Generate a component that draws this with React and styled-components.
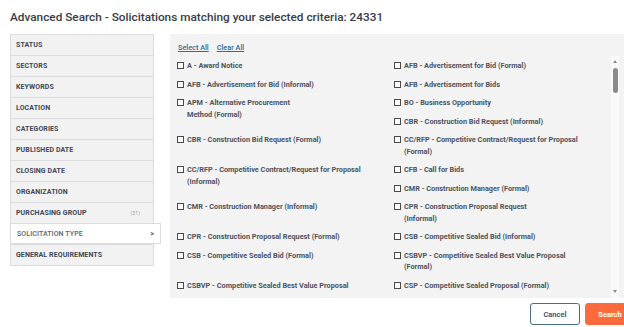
import React from 'react';
import styled, { createGlobalStyle, css } from 'styled-components';

const GlobalStyle = createGlobalStyle`
  html, body {
    margin: 0;
    padding: 0;
    background: #ffffff;
    overflow: hidden;
  }
  body {
    font-family: Roboto, "Liberation Sans", Arial, sans-serif;
  }
`;

const Modal = styled.div`
  width: 645px;
  box-sizing: border-box;
  padding: 9px 10px 0 10px;
`;

const Title = styled.h1`
  margin: 0;
  font-size: 11.8px;
  line-height: 17px;
  font-weight: 500;
  color: #383c48;
`;

const Body = styled.div`
  display: flex;
  align-items: flex-start;
  gap: 16px;
  margin-top: 8px;
`;

const Sidebar = styled.ul`
  list-style: none;
  margin: 0;
  padding: 0;
  width: 144px;
  flex-shrink: 0;
  box-sizing: border-box;
  background: #f2f2f2;
  border: 1px solid #dcdcdc;
`;

const NavItem = styled.li`
  height: 21px;
  box-sizing: border-box;
  display: flex;
  align-items: center;
  justify-content: space-between;
  padding: 0 5px;
  border-top: 1px solid #dcdcdc;
  font-size: 7px;
  font-weight: 700;
  color: #3e4757;
  text-transform: uppercase;
  letter-spacing: 0.1px;

  &:first-child {
    border-top: none;
    height: 20px;
  }

  ${(p) =>
    p.$active &&
    css`
      background: #ffffff;
      margin: 0 -8px 0 -1px;
      padding-left: 6px;
      border: 1px solid #dcdcdc;
      color: #5a6170;
      font-weight: 500;
    `}
`;

const Count = styled.span`
  font-size: 5px;
  font-weight: 400;
  color: #9a9a9a;
  margin-right: 8px;
`;

const Chevron = styled.span`
  font-size: 7px;
  font-weight: 700;
  color: #555;
  margin-right: 1px;
`;

const Panel = styled.section`
  width: 456px;
  height: 264px;
  flex-shrink: 0;
  background: #f3f3f3;
  display: flex;
  flex-direction: column;
  padding-top: 4px;
  box-sizing: border-box;
`;

const LinkRow = styled.div`
  display: flex;
  gap: 8px;
  padding-left: 8px;
  height: 18px;
  align-items: center;
`;

const TextLink = styled.a`
  font-size: 7.3px;
  font-weight: 500;
  color: #2d6c94;
  text-decoration: underline;
  cursor: pointer;
`;

const ListArea = styled.div`
  flex: 1;
  display: flex;
  min-height: 0;
`;

const Grid = styled.div`
  flex: 1;
  overflow: hidden;
  display: grid;
  grid-template-columns: 217px 217px;
  grid-auto-rows: auto;
  align-content: start;
  padding-left: 7px;
`;

const Option = styled.label`
  grid-column: ${(p) => p.$col};
  grid-row: ${(p) => p.$row} / span ${(p) => p.$span || 1};
  display: flex;
  align-items: flex-start;
  gap: 3px;
  padding: 4px 0 3px 0;
  font-size: 7.3px;
  line-height: 11.5px;
  font-weight: 700;
  color: #4d525d;
  cursor: pointer;
`;

const Box = styled.span`
  width: 7px;
  height: 7px;
  box-sizing: border-box;
  flex-shrink: 0;
  margin-top: 2px;
  border: 1px solid #4a4a4a;
  background: #fbfbfb;
`;

const Track = styled.div`
  width: 8px;
  margin-right: 7px;
  background: #fafafa;
  display: flex;
  flex-direction: column;
  align-items: center;
  padding: 4px 0 5px 0;
  box-sizing: border-box;
`;

const Arrow = styled.span`
  width: 0;
  height: 0;
  border-left: 2.5px solid transparent;
  border-right: 2.5px solid transparent;
  ${(p) =>
    p.$down
      ? css`
          border-top: 3px solid #8a8a8a;
          margin-top: auto;
        `
      : css`
          border-bottom: 3px solid #8a8a8a;
        `}
`;

const Thumb = styled.span`
  width: 5px;
  height: 25px;
  margin-top: 5px;
  border-radius: 3px;
  background: #8b8b8b;
`;

const Footer = styled.div`
  display: flex;
  justify-content: flex-end;
  gap: 5px;
  margin-top: 5px;
`;

const Button = styled.button`
  width: 50px;
  height: 22px;
  border-radius: 3px;
  font-family: Roboto, "Liberation Sans", Arial, sans-serif;
  font-size: 7.5px;
  font-weight: 700;
  cursor: pointer;
  ${(p) =>
    p.$primary
      ? css`
          background: #fd6a3b;
          border: 1px solid #fd6a3b;
          color: #ffffff;
        `
      : css`
          background: #ffffff;
          border: 1.5px solid #4b6d86;
          color: #3c5a73;
        `}
`;

const filters = [
  'Status',
  'Sectors',
  'Keywords',
  'Location',
  'Categories',
  'Published Date',
  'Closing Date',
  'Organization',
  'Purchasing Group',
  'Solicitation Type',
  'General Requirements',
];

const types = [
  { lines: ['A - Award Notice'], col: 1, row: 1 },
  { lines: ['AFB - Advertisement for Bid (Formal)'], col: 2, row: 1 },
  { lines: ['AFB - Advertisement for Bid (Informal)'], col: 1, row: 2 },
  { lines: ['AFB - Advertisement for Bids'], col: 2, row: 2 },
  { lines: ['APM - Alternative Procurement', 'Method (Formal)'], col: 1, row: 3, span: 2 },
  { lines: ['BO - Business Opportunity'], col: 2, row: 3 },
  { lines: ['CBR - Construction Bid Request (Informal)'], col: 2, row: 4 },
  { lines: ['CBR - Construction Bid Request (Formal)'], col: 1, row: 5 },
  { lines: ['CC/RFP - Competitive Contract/Request for Proposal', '(Formal)'], col: 2, row: 5 },
  { lines: ['CC/RFP - Competitive Contract/Request for Proposal', '(Informal)'], col: 1, row: 6, span: 2 },
  { lines: ['CFB - Call for Bids'], col: 2, row: 6 },
  { lines: ['CMR - Construction Manager (Formal)'], col: 2, row: 7 },
  { lines: ['CMR - Construction Manager (Informal)'], col: 1, row: 8 },
  { lines: ['CPR - Construction Proposal Request', '(Informal)'], col: 2, row: 8 },
  { lines: ['CPR - Construction Proposal Request (Formal)'], col: 1, row: 9 },
  { lines: ['CSB - Competitive Sealed Bid (Informal)'], col: 2, row: 9 },
  { lines: ['CSB - Competitive Sealed Bid (Formal)'], col: 1, row: 10 },
  { lines: ['CSBVP - Competitive Sealed Best Value Proposal', '(Formal)'], col: 2, row: 10 },
  { lines: ['CSBVP - Competitive Sealed Best Value Proposal'], col: 1, row: 11 },
  { lines: ['CSP - Competitive Sealed Proposal (Formal)'], col: 2, row: 11 },
];

export default function App() {
  return (
    <>
      <GlobalStyle />
      <Modal>
        <Title>Advanced Search - Solicitations matching your selected criteria: 24331</Title>
        <Body>
          <Sidebar>
            {filters.map((f) => (
              <NavItem key={f} $active={f === 'Solicitation Type'}>
                <span>{f}</span>
                {f === 'Purchasing Group' && <Count>(31)</Count>}
                {f === 'Solicitation Type' && <Chevron>&gt;</Chevron>}
              </NavItem>
            ))}
          </Sidebar>
          <Panel>
            <LinkRow>
              <TextLink>Select All</TextLink>
              <TextLink>Clear All</TextLink>
            </LinkRow>
            <ListArea>
              <Grid>
                {types.map((t) => (
                  <Option key={t.lines.join(' ')} $col={t.col} $row={t.row} $span={t.span}>
                    <Box />
                    <span>
                      {t.lines.map((l, i) => (
                        <React.Fragment key={i}>
                          {i > 0 && <br />}
                          {l}
                        </React.Fragment>
                      ))}
                    </span>
                  </Option>
                ))}
              </Grid>
              <Track>
                <Arrow />
                <Thumb />
                <Arrow $down />
              </Track>
            </ListArea>
          </Panel>
        </Body>
        <Footer>
          <Button>Cancel</Button>
          <Button $primary>Search</Button>
        </Footer>
      </Modal>
    </>
  );
}
